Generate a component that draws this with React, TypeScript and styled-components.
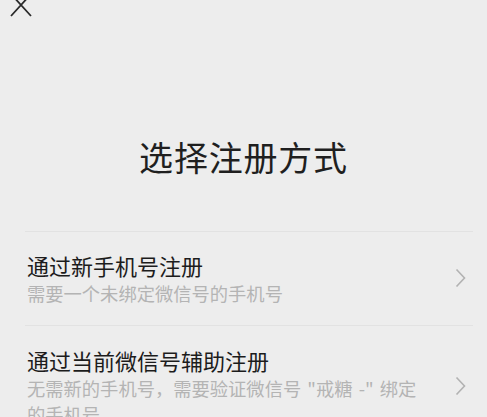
import React from "react";
import styled, { createGlobalStyle } from "styled-components";

const GlobalStyle = createGlobalStyle`
  html, body {
    margin: 0;
    padding: 0;
    background: #ededed;
  }
  body {
    font-family: "Noto Sans CJK SC", "Noto Sans", sans-serif;
    -webkit-font-smoothing: antialiased;
  }
`;

const Page = styled.div`
  width: 487px;
  height: 417px;
  overflow: hidden;
  background: #ededed;
  display: flex;
  flex-direction: column;
`;

const TopBar = styled.div`
  height: 20px;
  padding-left: 9px;
  display: flex;
  align-items: flex-start;
`;

const CloseIcon = styled.svg`
  width: 24px;
  height: 24px;
  margin-top: -7px;
`;

const Title = styled.h1`
  margin: 120px 0 0;
  font-size: 34px;
  font-weight: 400;
  line-height: 40px;
  text-align: center;
  color: #1f1f1f;
  letter-spacing: 0.8px;
`;

const List = styled.div`
  margin: 54px 14px 0 25px;
  border-top: 1px solid #e2e2e2;
`;

const Row = styled.div<{ $top: number }>`
  display: flex;
  align-items: center;
  padding: ${({ $top }) => $top}px 7px 19px 2px;
  border-bottom: 1px solid #e2e2e2;
`;

const Texts = styled.div`
  flex: 1;
  display: flex;
  flex-direction: column;
`;

const RowTitle = styled.div`
  font-size: 22px;
  line-height: 30px;
  color: #1c1c1c;
`;

const RowSub = styled.div`
  font-size: 18.3px;
  line-height: 26px;
  color: #b4b4b4;
  max-width: 398px;
  word-spacing: 2px;
`;

const Chevron = styled.svg`
  width: 11px;
  height: 20px;
  flex-shrink: 0;
`;

const Arrow = () => (
  <Chevron viewBox="0 0 11 20">
    <path d="M1.5 1.5 L9.5 10 L1.5 18.5" fill="none" stroke="#b2b2b2" strokeWidth="1.6" />
  </Chevron>
);

export default function App() {
  return (
    <Page>
      <GlobalStyle />
      <TopBar>
        <CloseIcon viewBox="0 0 24 24">
          <path d="M2 1 L22 23 M22 1 L2 23" stroke="#2a2a2a" strokeWidth="1.8" fill="none" />
        </CloseIcon>
      </TopBar>
      <Title>选择注册方式</Title>
      <List>
        <Row $top={18}>
          <Texts>
            <RowTitle>通过新手机号注册</RowTitle>
            <RowSub>需要一个未绑定微信号的手机号</RowSub>
          </Texts>
          <Arrow />
        </Row>
        <Row $top={19}>
          <Texts>
            <RowTitle>通过当前微信号辅助注册</RowTitle>
            <RowSub>无需新的手机号，需要验证微信号 "戒糖 -" 绑定的手机号</RowSub>
          </Texts>
          <Arrow />
        </Row>
      </List>
    </Page>
  );
}
